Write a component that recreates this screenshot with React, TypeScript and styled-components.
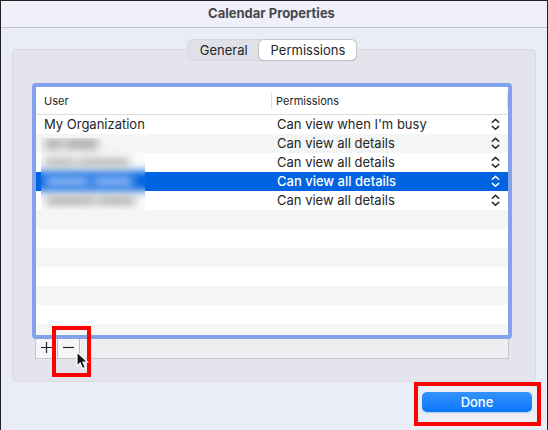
import React, { useState } from "react";
import styled, { createGlobalStyle } from "styled-components";

const GlobalStyle = createGlobalStyle`
  *, *::before, *::after { box-sizing: border-box; }
  body { margin: 0; }
  button, select { font: inherit; color: inherit; margin: 0; padding: 0; border: 0; background: none; }
`;

const Window = styled.div`
  display: flex;
  flex-direction: column;
  min-height: 100vh;
  border: 1px solid #231f20;
  background: #eaedf6;
  color: #252527;
  font: 13px/19px Inter, "Liberation Sans", sans-serif;
`;

const TitleBar = styled.header`
  display: flex;
  justify-content: center;
  height: 27px;
  padding: 2px 5px 0 0;
  border-bottom: 1px solid #c5c6d0;
  background: #eff0fa;
`;

const Title = styled.h1`
  margin: 0;
  font-size: 13px;
  line-height: 20px;
  font-weight: 700;
  color: #48484b;
`;

const Content = styled.main`
  display: flex;
  flex: 1;
  flex-direction: column;
  padding: 11px 11px 0;
`;

const Tabs = styled.div`
  z-index: 1;
  display: flex;
  align-self: center;
  height: 22px;
  margin: 0 4px -12px 0;
  border: 1px solid #d6d6de;
  border-radius: 6px;
  background: #e0e0e8;
`;

const Tab = styled.button<{ $active: boolean }>`
  height: 20px;
  padding: 0 11px 0 12px;
  border-radius: 5px;
  background: ${(p) => (p.$active ? "#fff" : "transparent")};
  box-shadow: ${(p) => (p.$active ? "0 0 0 1px #c6c6cd, 0 1px 1px #8c8c92" : "none")};
`;

const Panel = styled.section`
  display: flex;
  flex: 1;
  flex-direction: column;
  padding: 33px 23px 22px 19px;
  border: 1px solid #d9d9e2;
  border-radius: 5px;
  background: #e4e4ed;
`;

const List = styled.div`
  position: relative;
  display: flex;
  flex: 1;
  flex-direction: column;
  border: 4px solid #82a2ec;
  border-radius: 4px;
  background: #fff;
`;

const Table = styled.table`
  width: 100%;
  table-layout: fixed;
  border-collapse: separate;
  border-spacing: 0;
`;

const HeadCell = styled.th`
  height: 28px;
  padding: 0;
  border-bottom: 1px solid #dedede;
  font-size: 11px;
  font-weight: 400;
  line-height: 16px;
  text-align: left;
`;

const HeadLabel = styled.span<{ $inset: number }>`
  display: block;
  padding-left: ${(p) => p.$inset}px;
  border-right: 1px solid #dedede;
`;

const Row = styled.tr<{ $selected: boolean }>`
  height: 19px;
  &:nth-child(even) { background: #f4f5f5; }
  ${(p) => p.$selected && "&& { background: #0063e1; color: #fff; font-weight: 500; }"}
`;

const Cell = styled.td`
  height: 19px;
  padding: 0 0 0 8px;
`;

const PermissionCell = styled.td`
  display: flex;
  align-items: center;
  height: 19px;
  padding: 0 8px 0 5px;
`;

const PermissionSelect = styled.select`
  flex: 1;
  height: 19px;
  appearance: none;
  outline: none;
`;

const Stripes = styled.div`
  flex: 1;
  min-height: 125px;
  background: repeating-linear-gradient(#f4f5f5 0 19px, #fff 19px 38px);
`;

const Redaction = styled.div`
  position: absolute;
  top: 51px;
  left: 5px;
  width: 104px;
  height: 72px;
  overflow: hidden;
`;

const Actions = styled.div`
  display: flex;
  height: 20px;
  margin: 0 3px;
  border: 1px solid #c8c8cb;
  border-top: 0;
  background: #eeeef1;
`;

const ActionButton = styled.button`
  display: grid;
  place-items: center;
  width: 22px;
  padding-bottom: 2px;
  border-right: 1px solid #b9b9bc;
  background: #f6f6f8;
`;

const Highlight = styled.div`
  position: relative;
  display: flex;
  &::after {
    content: "";
    position: absolute;
    border: 4px solid #fe0000;
    pointer-events: none;
  }
`;

const RemoveHighlight = styled(Highlight)`
  &::after { inset: -13px -11px -19px -6px; }
`;

const Pointer = styled.svg`
  position: absolute;
  z-index: 1;
  top: 12px;
  left: 18px;
`;

const Footer = styled.footer`
  display: flex;
  justify-content: flex-end;
  padding: 10px 15px 18px;
`;

const DoneHighlight = styled(Highlight)`
  &::after { inset: -10px -9px -14px -8px; }
`;

const DoneButton = styled.button`
  width: 110px;
  height: 20px;
  border-radius: 5px;
  background: linear-gradient(#3492fc, #0a77fb);
  box-shadow: 0 1px 1px #b4c9ec;
  color: #fff;
  font-weight: 500;
`;

const Chevrons = () => (
  <svg width="9" height="13" viewBox="0 0 9 13" fill="none" stroke="currentColor" strokeWidth="1.5" strokeLinecap="round" strokeLinejoin="round" aria-hidden="true">
    <path d="M1.3 4.2 4.5 1.4l3.2 2.8M1.3 8.4l3.2 2.8 3.2-2.8" />
  </svg>
);

const BlurredNames = () => (
  <svg width="104" height="72" viewBox="0 0 104 72" aria-hidden="true">
    <defs>
      <filter id="soft" x="-20%" y="-20%" width="140%" height="140%">
        <feGaussianBlur stdDeviation="5 4" />
      </filter>
      <filter id="edge" x="-20%" y="-50%" width="140%" height="200%">
        <feGaussianBlur stdDeviation="2 4" />
      </filter>
    </defs>
    <rect width="104" height="72" fill="#fafafa" />
    <rect width="104" height="15" fill="#f4f5f5" />
    <rect x="-10" y="33" width="124" height="20" fill="#0063e1" filter="url(#edge)" />
    <g filter="url(#soft)">
      <path d="M4 1h17v10H4zM24 1h33v10H24z" fill="#a8a8a8" />
      <path d="M4 20h30v9H4zM37 20h51v9H37z" fill="#b8b8b8" />
      <path d="M4 38h44v11H4zM52 38h40v11H52z" fill="#8bb6f3" />
      <path d="M5 58h49v9H5zM57 58h37v9H57z" fill="#adadad" />
    </g>
  </svg>
);

const LEVELS = ["Can view when I'm busy", "Can view all details"];
const USERS = [
  { id: 1, name: "My Organization", level: 0 },
  { id: 2, name: "", level: 1 },
  { id: 3, name: "", level: 1 },
  { id: 4, name: "", level: 1 },
  { id: 5, name: "", level: 1 },
];

export default function App() {
  const [tab, setTab] = useState("Permissions");
  const [selected, setSelected] = useState(4);

  return (
    <Window>
      <GlobalStyle />
      <TitleBar>
        <Title>Calendar Properties</Title>
      </TitleBar>
      <Content>
        <Tabs role="tablist">
          {["General", "Permissions"].map((name) => (
            <Tab key={name} role="tab" aria-selected={tab === name} $active={tab === name} onClick={() => setTab(name)}>
              {name}
            </Tab>
          ))}
        </Tabs>
        <Panel>
          <List>
            <Table>
              <thead>
                <tr>
                  <HeadCell scope="col"><HeadLabel $inset={8}>User</HeadLabel></HeadCell>
                  <HeadCell scope="col"><HeadLabel $inset={4}>Permissions</HeadLabel></HeadCell>
                </tr>
              </thead>
              <tbody>
                {USERS.map((user) => (
                  <Row key={user.id} $selected={selected === user.id} onClick={() => setSelected(user.id)}>
                    <Cell>{user.name}</Cell>
                    <PermissionCell>
                      <PermissionSelect aria-label="Permissions" defaultValue={LEVELS[user.level]}>
                        {LEVELS.map((level) => <option key={level}>{level}</option>)}
                      </PermissionSelect>
                      <Chevrons />
                    </PermissionCell>
                  </Row>
                ))}
              </tbody>
            </Table>
            <Stripes />
            <Redaction><BlurredNames /></Redaction>
          </List>
          <Actions>
            <ActionButton aria-label="Add">
              <svg width="11" height="11" viewBox="0 0 11 11" stroke="#252527" strokeWidth="1.2"><path d="M0 5.5h11M5.5 0v11" /></svg>
            </ActionButton>
            <RemoveHighlight>
              <ActionButton aria-label="Remove">
                <svg width="11" height="11" viewBox="0 0 11 11" stroke="#252527" strokeWidth="1.2"><path d="M0 5.5h11" /></svg>
              </ActionButton>
              <Pointer width="13" height="19" viewBox="0 0 13 19" aria-hidden="true">
                <path d="M1 1v14l3.2-3 2.3 5.6 2.8-1.2L7 11h4.6z" fill="#111" stroke="#fff" strokeWidth="1.2" />
              </Pointer>
            </RemoveHighlight>
          </Actions>
        </Panel>
      </Content>
      <Footer>
        <DoneHighlight>
          <DoneButton>Done</DoneButton>
        </DoneHighlight>
      </Footer>
    </Window>
  );
}
